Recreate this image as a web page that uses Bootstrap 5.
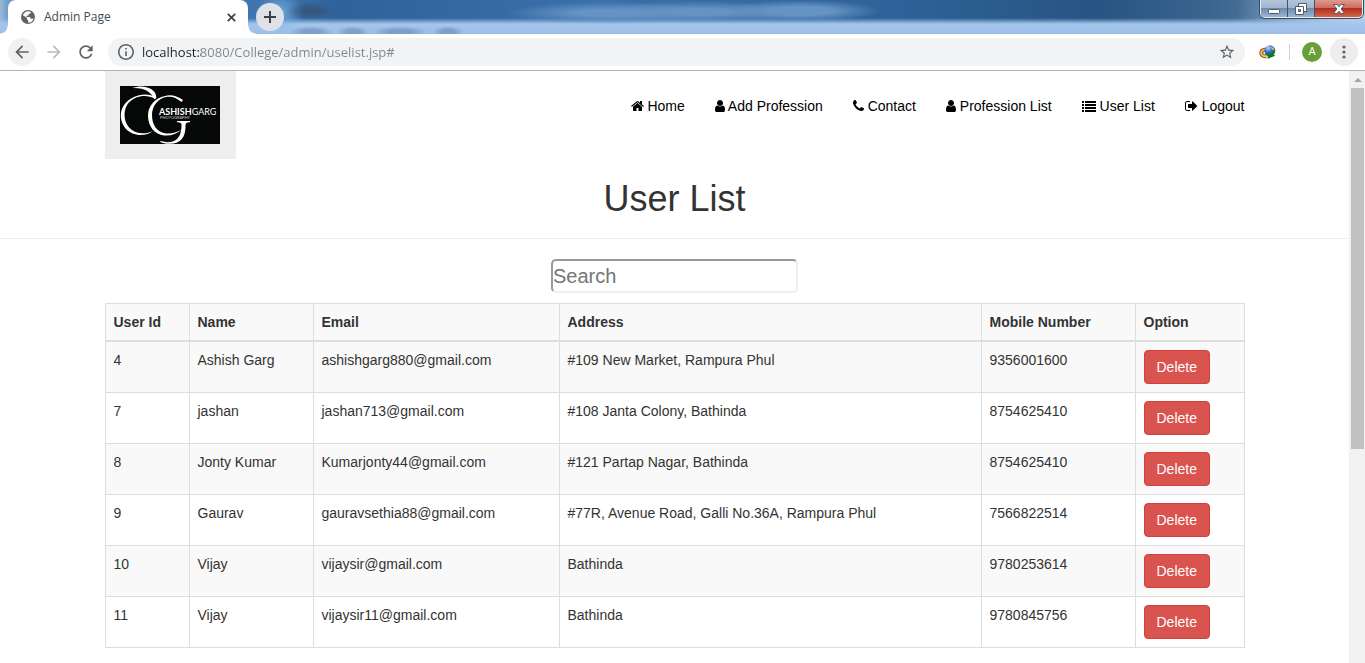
<!DOCTYPE html>
<html lang="en">
<head>
<meta charset="utf-8">
<meta name="viewport" content="width=device-width, initial-scale=1">
<title>Admin Page</title>
<link rel="stylesheet" href="https://cdn.jsdelivr.net/npm/bootstrap@5.3.0/dist/css/bootstrap.min.css">
<script src="https://cdn.jsdelivr.net/npm/bootstrap@5.3.0/dist/js/bootstrap.bundle.min.js"></script>
<style>
body{font-family:"Liberation Sans",Arial,sans-serif;font-size:14px;line-height:20px;color:#333;background:#fff}
button,input{font-family:inherit}
svg{flex:none}
.plain-btn{border:0;background:none;padding:0;display:flex;align-items:center;justify-content:center;color:#5f6368;flex:none}
/* window frame */
.tab-strip{height:34px;overflow:hidden;background:
  radial-gradient(ellipse 24px 9px at 310px 11px,#34506fb0 30%,#34506f00),
  radial-gradient(ellipse 24px 22px at 280px 12px,#79b4e8cc,#79b4e800),
  radial-gradient(ellipse 22px 6px at 311px 32px,#6f8fbbaa 40%,#6f8fbb00),
  radial-gradient(ellipse 16px 6px at 353px 32px,#6f8fbbaa 40%,#6f8fbb00),
  radial-gradient(ellipse 28px 6px at 400px 32px,#6f8fbbaa 40%,#6f8fbb00),
  radial-gradient(ellipse 16px 6px at 448px 32px,#6f8fbbaa 40%,#6f8fbb00),
  radial-gradient(ellipse 105px 11px at 610px 13px,#6593c3 30%,#6593c300),
  radial-gradient(ellipse 100px 11px at 700px 12px,#6593c3 30%,#6593c300),
  radial-gradient(ellipse 80px 11px at 800px 11px,#6593c3 40%,#6593c300),
  linear-gradient(#a6c8f000 18px,#a4c6ec 24px,#9dbde7),
  linear-gradient(100deg,#b4d0ee00 calc(100% - 130px),#b9cfe8 calc(100% - 20px)),
  linear-gradient(90deg,#9cb8d8 0,#6f9dcc 8px,#3f76b1 250px,#2f6299 340px,#3a70ab 600px,#2e6298 900px,#275482 1100px,#3a658f 1210px,#6d8fb3)}
.page-tab{width:240px;padding:0 12px;border-radius:8px 8px 0 0;background:#fff;margin-left:8px;position:relative;font:12px/16px "Open Sans",sans-serif;color:#45494d}
.page-tab::before,.page-tab::after{content:"";position:absolute;bottom:0;width:8px;height:8px}
.page-tab::before{right:100%;background:radial-gradient(circle at 0 0,#fff0 7px,#fff 8px)}
.page-tab::after{left:100%;background:radial-gradient(circle at 100% 0,#fff0 7px,#fff 8px)}
.new-tab{width:28px;height:28px;border-radius:50%;background:#dee1e6;margin:3px 0 0 8px;color:#3c4043}
.window-btns{height:18px;border:1px solid #e3edf7;border-top:0;border-radius:0 0 5px 5px;overflow:hidden;margin-right:2px;box-shadow:0 0 0 1px #36495f;align-self:flex-start}
.window-btns button{width:27px;background:linear-gradient(#b3c6da,#a0b6cd 45%,#6f8baa 50%,#9bb6d3);border-right:1px solid #40546c}
.window-btns button:last-child{width:47px;border:0;background:linear-gradient(#dd9b8e,#cf6d5d 45%,#b52f1d 50%,#d5644c)}
.toolbar{height:36px;padding:0 7px 0 8px;background:#fff}
.chrome-top{border-bottom:1px solid #b2b4b6}
.round{width:28px;height:28px;border-radius:50%}
.round.lit{background:#f1f1f1}
.toolbar .round:last-child{background:#ededed}
.omnibox{height:28px;border-radius:14px;background:#f1f3f4;padding:0 10px;margin:0 14px 0 8px;color:#5f6368}
.url{border:0;outline:0;padding:0;height:28px;margin-left:8px;font:13px/28px "Open Sans",sans-serif;color:#777c80;min-width:0;background:linear-gradient(90deg,#202124 59px,#80868b 59px);-webkit-background-clip:text;background-clip:text;-webkit-text-fill-color:transparent}
.divider-v{width:1px;height:16px;background:#cfd1d4;margin:0 12px 0 13px}
.avatar{width:20px;height:20px;border-radius:50%;background:#689f38;color:#fff;font:11px/20px Roboto,sans-serif;margin-right:8px}
/* scroll bar */
.scroll-track{width:16px;background:#f1f1f1;padding:0 2px 0 2px}
.scroll-thumb{height:361px;width:13px;background:#c1c1c1}
.scroll-track .plain-btn{height:17px;width:13px}
/* page */
.page-width{width:100%;max-width:1140px;margin:0 auto}
.brand{background:#eee;padding:15px;width:131px;height:88px}
.main-nav{padding-top:25px;gap:30px}
.main-nav a{color:#000;text-decoration:none;white-space:nowrap}
.main-nav svg{vertical-align:-2px;fill:currentColor}
.page-title{font-size:36px;line-height:40px;margin:20px 0 19px;padding:0;font-weight:400;color:#333}
.rule{margin:0 0 20px;border:0;border-top:1px solid #eee;opacity:1}
.search-box{display:block;width:247px;height:34px;margin:0 auto 10px;padding:0;border:2px solid;border-color:#999 #eee #eee #999;border-radius:5px;font-size:20px;color:#333}
.search-box::placeholder{color:#757575}
.user-table{margin:0;color:#333;table-layout:fixed;border-color:#ddd}
.user-table>:not(caption)>*>*{padding:8px;border:1px solid #ddd;vertical-align:top;color:#333;box-shadow:none;background:#fff}
.user-table>thead>tr>th,.user-table>tbody>tr:nth-child(odd)>td{background:#f9f9f9}
.user-table>thead>tr>th{border-bottom-width:2px}
.w-id{width:84px}.w-name{width:124px}.w-mail{width:246px}.w-phone{width:154px}.w-opt{width:109px}
.btn-delete{display:block;padding:6px 12px;font-size:14px;line-height:20px;border-radius:4px;--bs-btn-color:#fff;--bs-btn-bg:#d9534f;--bs-btn-border-color:#d43f3a;--bs-btn-hover-color:#fff;--bs-btn-hover-bg:#c9302c}
</style>
</head>
<body class="d-flex flex-column min-vh-100">
<header class="chrome-top">
  <div class="tab-strip d-flex">
    <div class="page-tab d-flex align-items-center">
      <svg width="16" height="16" viewBox="0 0 16 16"><circle cx="8" cy="8" r="7" fill="#5f6368"/><path fill="#fff" d="M8.300 2.300 11 3l-.6 1.500-1.800.4v1.700H7L6.200 8h3.600l.9 1.600 1.600.4.900-.8.400.2c-.5 2.200-2.500 4.200-5.300 4.300v-1.900l-1.200-1.200V9L3 6.300l-.3.700c.5-2.600 2.700-4.700 5.600-4.700z"/></svg>
      <span class="ms-2">Admin Page</span>
      <button class="plain-btn ms-auto" aria-label="Close tab"><svg width="9" height="9" viewBox="0 0 9 9" stroke="#3c4043" stroke-width="1.700"><path d="M.8.8 8.200 8.200M8.200.8.8 8.200"/></svg></button>
    </div>
    <button class="plain-btn new-tab" aria-label="New tab"><svg width="12" height="12" viewBox="0 0 12 12" stroke="currentColor" stroke-width="2"><path d="M6 0v12M0 6h12"/></svg></button>
    <div class="window-btns d-flex ms-auto">
      <button class="plain-btn" aria-label="Minimize"><svg width="14" height="16" viewBox="0 0 14 16"><rect x="1.500" y="8.500" width="11" height="4" rx="1" fill="#fff" stroke="#535a6b"/></svg></button>
      <button class="plain-btn" aria-label="Restore"><svg width="14" height="16" viewBox="0 0 14 16" fill="#fff" stroke="#535a6b"><path d="M4.500 2.500h8v8h-8z"/><path d="M1.500 5.500h8v8h-8z"/><path d="M4.500 8.500h2v2h-2z" fill="#7f94ad"/></svg></button>
      <button class="plain-btn" aria-label="Close"><svg width="14" height="16" viewBox="0 0 14 16"><path d="M1.500 3.500h3.500l2 2.200 2-2.200h3.500L9.200 8l3.300 4.500H9l-2-2.300-2 2.300H1.500L4.800 8z" fill="#fff" stroke="#535a6b"/></svg></button>
    </div>
  </div>
  <div class="toolbar d-flex align-items-center">
    <button class="plain-btn round lit" aria-label="Back"><svg width="20" height="20" viewBox="0 0 24 24" fill="currentColor"><path d="M20 11H7.830l5.590-5.590L12 4l-8 8 8 8 1.410-1.410L7.830 13H20v-2z"/></svg></button>
    <button class="plain-btn round ms-1" aria-label="Forward"><svg width="20" height="20" viewBox="0 0 24 24" fill="#babcbe"><path d="M12 4l-1.410 1.410L16.170 11H4v2h12.170l-5.580 5.590L12 20l8-8z"/></svg></button>
    <button class="plain-btn round ms-1" aria-label="Reload"><svg width="20" height="20" viewBox="0 0 24 24" fill="currentColor"><path d="M17.650 6.350C16.200 4.900 14.210 4 12 4c-4.420 0-7.990 3.580-7.990 8s3.570 8 7.990 8c3.730 0 6.840-2.550 7.730-6h-2.080c-.82 2.330-3.040 4-5.650 4-3.310 0-6-2.690-6-6s2.690-6 6-6c1.660 0 3.140.69 4.220 1.780L13 11h7V4l-2.350 2.350z"/></svg></button>
    <div class="omnibox d-flex align-items-center flex-grow-1">
      <svg width="16" height="16" viewBox="2 2 20 20" fill="currentColor"><path d="M11 17h2v-6h-2v6zm1-15C6.480 2 2 6.480 2 12s4.480 10 10 10 10-4.480 10-10S17.520 2 12 2zm0 18c-4.410 0-8-3.590-8-8s3.590-8 8-8 8 3.590 8 8-3.590 8-8 8zM11 9h2V7h-2v2z"/></svg>
      <input class="url flex-grow-1" type="text" aria-label="Address" value="localhost:8080/College/admin/uselist.jsp#">
      <button class="plain-btn" aria-label="Bookmark"><svg width="16" height="16" viewBox="1 1 22 22" fill="currentColor"><path d="M22 9.240l-7.190-.62L12 2 9.190 8.630 2 9.240l5.460 4.730L5.820 21 12 17.270 18.180 21l-1.630-7.030L22 9.240zM12 15.400l-3.760 2.270 1-4.280-3.320-2.880 4.380-.38L12 6.100l1.710 4.040 4.380.38-3.320 2.880 1 4.280L12 15.400z"/></svg></button>
    </div>
    <button class="plain-btn" aria-label="Download manager"><svg width="17" height="16" viewBox="0 0 17 16">
      <defs><radialGradient id="globe" cx=".35" cy=".25" r=".8"><stop offset="0" stop-color="#b9dcfa"/><stop offset=".45" stop-color="#3d74c4"/><stop offset="1" stop-color="#173b73"/></radialGradient></defs>
      <g fill="none" stroke-width="1.400"><path d="M7 4.200C3 4.500.8 6.800 1 9.500c.2 2.500 3 4.300 6.500 4" stroke="#d84338"/><path d="M7 5.500C4 5.800 2.200 7.500 2.300 9.300c.1 1.800 2.500 2.900 5.200 2.800" stroke="#f2c92c"/><path d="M7 6.800c-2 .2-3.400 1.200-3.400 2.400 0 1 1.500 1.700 4 1.700" stroke="#3ba648"/></g>
      <circle cx="10.800" cy="6.700" r="5.400" fill="url(#globe)"/><path d="M6 9.500l4.500 1 5.700-4.800-1.400 4.800 1.400 1.200-7.700 3.300.4-2.300z" fill="#127a22"/><path d="M12 2.500l2.500 1.500.5 2.500-2-1z" fill="#d3c45c"/></svg></button>
    <span class="divider-v"></span>
    <span class="avatar text-center">A</span>
    <button class="plain-btn round" aria-label="Menu"><svg width="4" height="14" viewBox="0 0 4 14" fill="currentColor"><circle cx="2" cy="2" r="1.600"/><circle cx="2" cy="7" r="1.600"/><circle cx="2" cy="12" r="1.600"/></svg></button>
  </div>
</header>
<div class="d-flex flex-grow-1">
  <main class="flex-grow-1">
    <div class="page-width d-flex justify-content-between align-items-start">
      <a class="brand d-block" href="#" aria-label="Ashish Garg Photography">
        <svg class="d-block" width="100" height="58" viewBox="0 0 100 58">
          <rect width="100" height="58" fill="#050806"/>
          <g fill="#fff">
            <path d="M35 11C30 8 24 8 19 9.200 8 12 1 20 .800 29c0 11 8 20 20 20 5 0 9-1.500 12-4-4 2-7 2.600-11 2.300C11 46.500 4.500 39 4.500 28.500 4.500 19 11 12 20 10.400c6-1 10 0 15 2z"/>
            <path d="M12 2C19-.5 26 0 31 3c4 2.500 5.500 5.500 5.200 9.200l-2 1C31 6 25 1.500 12 2z"/>
            <path d="M63 14C57 10 51 8.200 45 10c-10 2-17 10-17 19.500C28 41 35 48.500 44 49.500c7 .6 13-2 18-6-6 3-11 4.700-17 3.800C37 46 32 39 32 29c0-9 6-16.500 14-18 6-1 10 .6 15.500 5z"/>
            <path d="M57 35h13v1.200c-4 .2-4.500 1-4.500 4C65.500 51 61 57.500 50 57.800c-4 .1-7-.5-10-2l.5-.7C50 58 58 55.500 60.500 47c.8-3 1-6 1-8 0-2.200-1-2.600-4.500-2.800z"/>
          </g>
          <text x="39" y="29" font-family="Lato,sans-serif" font-size="9" font-weight="700" fill="#fff">ASHISH<tspan font-weight="400">GARG</tspan></text>
          <text x="40" y="33" font-family="Lato,sans-serif" font-size="4" fill="#ccc">PHOTOGRAPHY</text>
        </svg>
      </a>
      <nav class="main-nav d-flex flex-wrap justify-content-end" aria-label="Main">
        <a href="#"><svg width="13" height="14" viewBox="64 0 1664 1792"><path d="M1472 992v480q0 26-19 45t-45 19h-384v-384h-256v384h-384q-26 0-45-19t-19-45v-480q0-1 .5-3t.5-3l575-474 575 474q1 2 1 6zm223-69l-62 74q-8 9-21 11h-3q-13 0-21-7l-692-577-692 577q-12 8-24 7-13-2-21-11l-62-74q-8-10-7-23.500t11-21.500l719-599q32-26 76-26t76 26l244 204v-195q0-14 9-23t23-9h192q14 0 23 9t9 23v408l219 182q10 8 11 21.500t-7 23.500z"/></svg> Home</a>
        <a href="#"><svg width="10" height="14" viewBox="256 0 1280 1792"><path d="M1536 1399q0 109-62.500 187t-150.500 78h-854q-88 0-150.500-78t-62.500-187q0-85 8.500-160.500t31.500-152 58.500-131 94-89 134.500-34.500q131 128 313 128t313-128q76 0 134.500 34.500t94 89 58.500 131 31.500 152 8.500 160.500zm-256-887q0 159-112.500 271.500t-271.500 112.500-271.500-112.500-112.500-271.500 112.500-271.500 271.500-112.500 271.500 112.500 112.500 271.500z"/></svg> Add Profession</a>
        <a href="#"><svg width="11" height="14" viewBox="192 0 1408 1792"><path d="M1600 1240q0 27-10 70.500t-21 68.500q-21 50-122 106-94 51-186 51-27 0-52.500-3.500t-57.500-12.500-47.500-14.500-55.500-20.500-49-18q-98-35-175-83-128-79-264.500-215.500t-215.500-264.500q-48-77-83-175-3-9-18-49t-20.500-55.500-14.500-47.500-12.500-57.500-3.500-52.500q0-92 51-186 56-101 106-122 25-11 68.500-21t70.500-10q14 0 21 3 18 6 53 76 11 19 30 54t35 63.500 31 53.500q3 4 17.500 25t21.500 35.500 7 28.500q0 20-28.500 50t-62 55-62 53-28.500 46q0 9 5 22.500t8.500 20.500 14 24 11.500 19q76 137 174 235t235 174q2 1 19 11.500t24 14 20.500 8.500 22.500 5q18 0 46-28.500t53-62 55-62 50-28.500q14 0 28.500 7t35.500 21.500 25 17.500q25 15 53.500 31t63.500 35 54 30q70 35 76 53 3 7 3 21z"/></svg> Contact</a>
        <a href="#"><svg width="10" height="14" viewBox="256 0 1280 1792"><path d="M1536 1399q0 109-62.500 187t-150.500 78h-854q-88 0-150.500-78t-62.500-187q0-85 8.500-160.500t31.500-152 58.500-131 94-89 134.500-34.500q131 128 313 128t313-128q76 0 134.500 34.500t94 89 58.500 131 31.500 152 8.500 160.500zm-256-887q0 159-112.500 271.500t-271.500 112.500-271.500-112.500-112.500-271.500 112.500-271.500 271.500-112.500 271.500 112.500 112.500 271.500z"/></svg> Profession List</a>
        <a href="#"><svg width="14" height="14" viewBox="0 0 14 14"><path d="M0 2h2v2H0zM3 2h11v2H3zM0 5h2v2H0zM3 5h11v2H3zM0 8h2v2H0zM3 8h11v2H3zM0 11h2v2H0zM3 11h11v2H3z"/></svg> User List</a>
        <a href="#"><svg width="13" height="14" viewBox="64 0 1664 1792"><path d="M704 1440q0 4 1 20t.5 26.500-3 23.500-10 19.500-20.500 6.500h-320q-119 0-203.500-84.500t-84.500-203.500v-704q0-119 84.500-203.500t203.500-84.500h320q13 0 22.500 9.500t9.500 22.500q0 4 1 20t.5 26.500-3 23.500-10 19.500-20.500 6.500h-320q-66 0-113 47t-47 113v704q0 66 47 113t113 47h312l11.500 1 11.500 3 8 5.500 7 9 2 13.500zm928-544q0 26-19 45l-544 544q-19 19-45 19t-45-19-19-45v-288h-448q-26 0-45-19t-19-45v-384q0-26 19-45t45-19h448v-288q0-26 19-45t45-19 45 19l544 544q19 19 19 45z"/></svg> Logout</a>
      </nav>
    </div>
    <h1 class="page-title text-center">User List</h1>
    <hr class="rule">
    <input class="search-box" type="text" placeholder="Search" aria-label="Search">
    <div class="page-width">
      <table class="table user-table">
        <colgroup><col class="w-id"><col class="w-name"><col class="w-mail"><col><col class="w-phone"><col class="w-opt"></colgroup>
        <thead><tr><th>User Id</th><th>Name</th><th>Email</th><th>Address</th><th>Mobile Number</th><th>Option</th></tr></thead>
        <tbody>
          <tr><td>4</td><td>Ashish Garg</td><td>ashishgarg880@gmail.com</td><td>#109 New Market, Rampura Phul</td><td>9356001600</td><td><button class="btn btn-delete">Delete</button></td></tr>
          <tr><td>7</td><td>jashan</td><td>jashan713@gmail.com</td><td>#108 Janta Colony, Bathinda</td><td>8754625410</td><td><button class="btn btn-delete">Delete</button></td></tr>
          <tr><td>8</td><td>Jonty Kumar</td><td>Kumarjonty44@gmail.com</td><td>#121 Partap Nagar, Bathinda</td><td>8754625410</td><td><button class="btn btn-delete">Delete</button></td></tr>
          <tr><td>9</td><td>Gaurav</td><td>gauravsethia88@gmail.com</td><td>#77R, Avenue Road, Galli No.36A, Rampura Phul</td><td>7566822514</td><td><button class="btn btn-delete">Delete</button></td></tr>
          <tr><td>10</td><td>Vijay</td><td>vijaysir@gmail.com</td><td>Bathinda</td><td>9780253614</td><td><button class="btn btn-delete">Delete</button></td></tr>
          <tr><td>11</td><td>Vijay</td><td>vijaysir11@gmail.com</td><td>Bathinda</td><td>9780845756</td><td><button class="btn btn-delete">Delete</button></td></tr>
        </tbody>
      </table>
    </div>
  </main>
  <div class="scroll-track flex-shrink-0">
    <button class="plain-btn" aria-label="Scroll up"><svg width="8" height="4" viewBox="0 0 8 4"><path d="M0 4l4-4 4 4z" fill="#a3a3a3"/></svg></button>
    <div class="scroll-thumb"></div>
  </div>
</div>
</body>
</html>
